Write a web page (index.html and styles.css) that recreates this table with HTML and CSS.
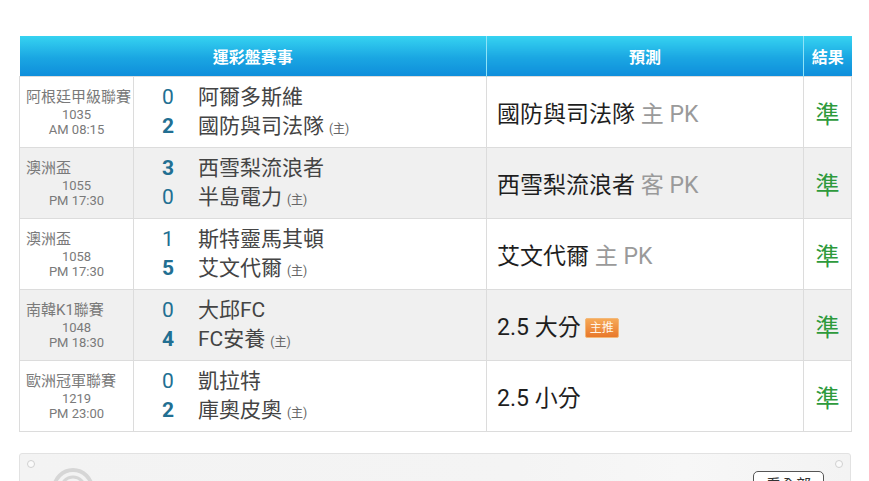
FILE: index.html
```html
<!DOCTYPE html>
<html lang="zh-Hant">
<head>
<meta charset="utf-8">
<title>運彩盤賽事</title>
<link rel="stylesheet" href="styles.css">
</head>
<body>
<div class="page">
  <table class="games">
    <colgroup>
      <col class="c-info">
      <col class="c-teams">
      <col class="c-pred">
      <col class="c-res">
    </colgroup>
    <thead>
      <tr>
        <th colspan="2">運彩盤賽事</th>
        <th>預測</th>
        <th>結果</th>
      </tr>
    </thead>
    <tbody>
      <tr>
        <td class="info"><div class="league">阿根廷甲級聯賽</div><div class="meta">1035</div><div class="meta">AM 08:15</div></td>
        <td class="teams">
          <div class="line"><span class="score">0</span><span class="name">阿爾多斯維</span></div>
          <div class="line"><span class="score win">2</span><span class="name">國防與司法隊</span><span class="home">(主)</span></div>
        </td>
        <td class="pred">國防與司法隊<span class="sub"> 主 PK</span></td>
        <td class="res">準</td>
      </tr>
      <tr class="alt">
        <td class="info"><div class="league">澳洲盃</div><div class="meta">1055</div><div class="meta">PM 17:30</div></td>
        <td class="teams">
          <div class="line"><span class="score win">3</span><span class="name">西雪梨流浪者</span></div>
          <div class="line"><span class="score">0</span><span class="name">半島電力</span><span class="home">(主)</span></div>
        </td>
        <td class="pred">西雪梨流浪者<span class="sub"> 客 PK</span></td>
        <td class="res">準</td>
      </tr>
      <tr>
        <td class="info"><div class="league">澳洲盃</div><div class="meta">1058</div><div class="meta">PM 17:30</div></td>
        <td class="teams">
          <div class="line"><span class="score">1</span><span class="name">斯特靈馬其頓</span></div>
          <div class="line"><span class="score win">5</span><span class="name">艾文代爾</span><span class="home">(主)</span></div>
        </td>
        <td class="pred">艾文代爾<span class="sub"> 主 PK</span></td>
        <td class="res">準</td>
      </tr>
      <tr class="alt">
        <td class="info"><div class="league">南韓K1聯賽</div><div class="meta">1048</div><div class="meta">PM 18:30</div></td>
        <td class="teams">
          <div class="line"><span class="score">0</span><span class="name">大邱FC</span></div>
          <div class="line"><span class="score win">4</span><span class="name">FC安養</span><span class="home">(主)</span></div>
        </td>
        <td class="pred">2.5 大分<span class="badge">主推</span></td>
        <td class="res">準</td>
      </tr>
      <tr>
        <td class="info"><div class="league">歐洲冠軍聯賽</div><div class="meta">1219</div><div class="meta">PM 23:00</div></td>
        <td class="teams">
          <div class="line"><span class="score">0</span><span class="name">凱拉特</span></div>
          <div class="line"><span class="score win">2</span><span class="name">庫奧皮奧</span><span class="home">(主)</span></div>
        </td>
        <td class="pred">2.5 小分</td>
        <td class="res">準</td>
      </tr>
    </tbody>
  </table>

  <div class="card">
    <span class="dot dot-l"></span>
    <span class="dot dot-r"></span>
    <div class="card-head">
      <svg class="card-icon" width="44" height="44" viewBox="0 0 44 44">
        <circle cx="22" cy="22" r="19" fill="none" stroke="#d6d6d6" stroke-width="4"/>
        <circle cx="22" cy="22" r="12" fill="none" stroke="#d6d6d6" stroke-width="3"/>
      </svg>
      <span class="card-title">賭徒</span>
      <span class="card-btn">看全部</span>
    </div>
  </div>
</div>
</body>
</html>
```

FILE: styles.css
```css
html, body {
  margin: 0;
  padding: 0;
  background: #ffffff;
}

body {
  font-family: "Roboto", "Noto Sans CJK TC", "Noto Sans", sans-serif;
  color: #333;
  overflow: hidden;
}

.page {
  padding: 36px 18px 0 19px;
}

.games {
  width: 832px;
  border-collapse: collapse;
  table-layout: fixed;
}

.c-info { width: 114px; }
.c-teams { width: 353px; }
.c-pred { width: 317px; }
.c-res { width: 48px; }

.games th {
  height: 40px;
  padding: 0;
  color: #ffffff;
  font-size: 16px;
  font-weight: 700;
  text-align: center;
  background: linear-gradient(#36d3f1, #1aa6e2 55%, #0f8edb);
  border-left: 1px solid #8fe3f7;
  border-right: 1px solid #8fe3f7;
}

.games th:first-child { border-left: none; }
.games th:last-child { border-right: none; }

.games td {
  border: 1px solid #dcdcdc;
  height: 70px;
  padding: 0;
  vertical-align: middle;
}

.games tr.alt td { background: #f0f0f0; }

.games td.info {
  padding-left: 6px;
  color: #7a7a7a;
}

.league {
  font-size: 15px;
  line-height: 20px;
  white-space: nowrap;
  text-align: left;
}

.meta {
  font-size: 13px;
  line-height: 15px;
  text-align: center;
  padding-right: 6px;
}

.games td.teams {
  padding-left: 28px;
}

.line {
  height: 29px;
  line-height: 29px;
  white-space: nowrap;
}

.score {
  display: inline-block;
  width: 36px;
  font-size: 21px;
  color: #226f92;
}

.score.win { font-weight: 700; }

.name {
  font-size: 21px;
  color: #444;
}

.home {
  font-size: 12px;
  color: #666;
  margin-left: 5px;
}

.games td.pred {
  padding-left: 10px;
  font-size: 23px;
  color: #1e1e1e;
  white-space: nowrap;
}

.sub { color: #9a9a9a; }

.badge {
  display: inline-block;
  vertical-align: 3px;
  margin-left: 4px;
  padding: 0 4px;
  height: 18px;
  line-height: 18px;
  font-size: 12px;
  color: #fff5e6;
  background: linear-gradient(#f6a957, #e8782b);
  border: 1px solid #f3b878;
  border-radius: 2px;
}

.games td.res {
  text-align: center;
  font-size: 24px;
  color: #2e9a3c;
}

.card {
  position: relative;
  margin-top: 21px;
  width: 830px;
  height: 90px;
  border: 1px solid #e2e2e2;
  border-radius: 3px;
  background: linear-gradient(90deg, #f3f3f3, #f4f4f4 60%, #f7f7f7 80%, #f3f3f3);
}

.dot {
  position: absolute;
  top: 6px;
  width: 6px;
  height: 6px;
  border: 1.5px solid #d0d0d0;
  border-radius: 50%;
  background: #fafafa;
}

.dot-l { left: 7px; }
.dot-r { right: 7px; }

.card-head {
  display: flex;
  align-items: flex-start;
  padding: 13px 26px 0 31px;
}

.card-icon { flex: none; }

.card-title {
  margin-left: 11px;
  margin-top: 12px;
  font-size: 15px;
  color: #888;
}

.card-btn {
  margin-left: auto;
  margin-top: 4px;
  padding: 1px 12px;
  font-size: 15px;
  color: #333;
  background: #fff;
  border: 1px solid #555;
  border-radius: 5px;
}
```
